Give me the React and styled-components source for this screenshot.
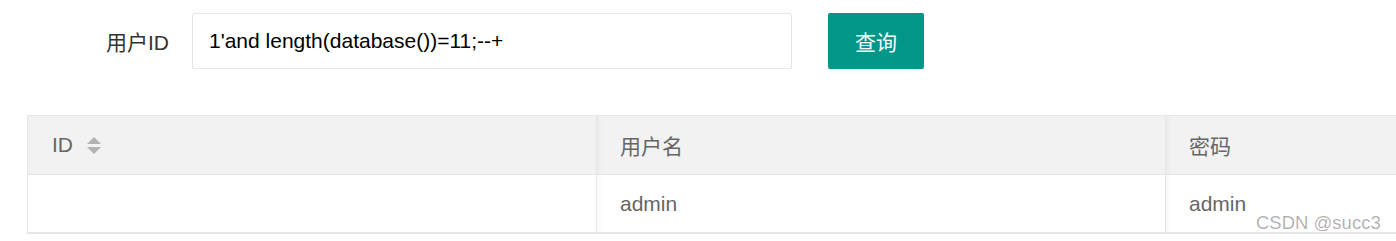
import React from 'react'
import styled, { createGlobalStyle } from 'styled-components'

const GlobalStyle = createGlobalStyle`
    body {
        margin: 0;
        background: #fff;
        overflow: hidden;
        font-family: "Liberation Sans", "Noto Sans CJK SC", sans-serif;
    }
`

const Page = styled.div`
    position: relative;
    height: 241px;
`

const FormRow = styled.div`
    display: flex;
    align-items: center;
    padding-top: 13px;
`

const Label = styled.label`
    width: 169px;
    margin-right: 23px;
    text-align: right;
    font-size: 21px;
    color: #333;
`

const Input = styled.input`
    box-sizing: border-box;
    width: 600px;
    height: 56px;
    padding: 0 16px;
    border: 1px solid #e6e6e6;
    border-radius: 2px;
    font-family: inherit;
    font-size: 21px;
    color: #000;
    outline: none;
`

const Button = styled.button`
    width: 96px;
    height: 56px;
    margin-left: 36px;
    border: none;
    border-radius: 2px;
    background: #009688;
    color: #fff;
    font-family: inherit;
    font-size: 21px;
`

const Table = styled.div`
    width: 1709px;
    margin: 46px 0 0 27px;
    border: 1px solid #e6e6e6;
    border-bottom: 2px solid #e6e6e6;
    color: #666;
    font-size: 21px;
`

const Row = styled.div`
    display: grid;
    grid-template-columns: 568px 569px 1fr;
    height: ${p => p.$h}px;
    background: ${p => (p.$head ? '#f2f2f2' : '#fff')};
    border-bottom: ${p => (p.$head ? '1px solid #e6e6e6' : 'none')};
`

const Cell = styled.div`
    display: flex;
    align-items: center;
    padding-left: ${p => p.$pad}px;
    border-left: ${p => (p.$first ? 'none' : '1px solid #e6e6e6')};
    box-shadow: ${p => (p.$first ? 'none' : 'inset 6px 0 6px -6px rgba(0,0,0,0.07)')};
`

const Sort = styled.span`
    display: inline-flex;
    flex-direction: column;
    gap: 3px;
    margin-left: 14px;
`

const Tri = styled.span`
    width: 0;
    height: 0;
    border-left: 7px solid transparent;
    border-right: 7px solid transparent;
    ${p => (p.$up ? 'border-bottom: 7px solid #b2b2b2;' : 'border-top: 7px solid #b2b2b2;')}
`

const Watermark = styled.div`
    position: absolute;
    left: 1256px;
    top: 212px;
    font-size: 18.5px;
    color: rgba(0, 0, 0, 0.32);
`

export default function App() {
    return (
        <Page>
            <GlobalStyle />
            <FormRow>
                <Label>用户ID</Label>
                <Input defaultValue="1'and length(database())=11;--+" />
                <Button>查询</Button>
            </FormRow>
            <Table>
                <Row $head $h={58}>
                    <Cell $first $pad={24}>
                        ID
                        <Sort>
                            <Tri $up />
                            <Tri />
                        </Sort>
                    </Cell>
                    <Cell $pad={23}>用户名</Cell>
                    <Cell $pad={23}>密码</Cell>
                </Row>
                <Row $h={57}>
                    <Cell $first $pad={24}></Cell>
                    <Cell $pad={23}>admin</Cell>
                    <Cell $pad={23}>admin</Cell>
                </Row>
            </Table>
            <Watermark>CSDN @succ3</Watermark>
        </Page>
    )
}
